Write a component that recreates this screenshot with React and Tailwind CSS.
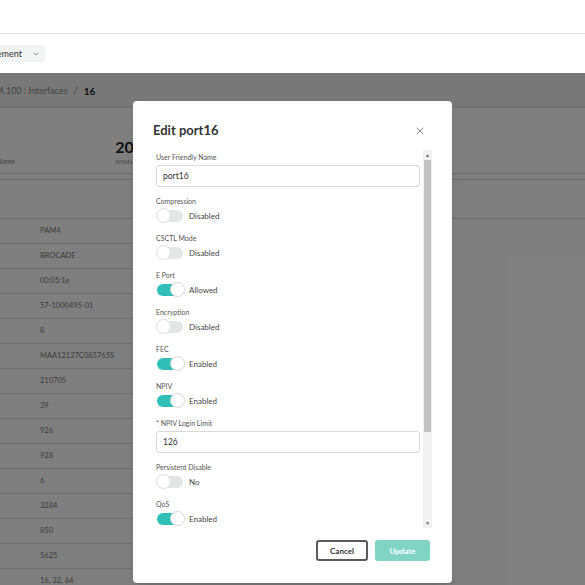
import { X, ChevronDown } from "lucide-react";

const rows = [
  "PAM4",
  "BROCADE",
  "00:05:1e",
  "57-1000495-01",
  "8",
  "MAA12127C085765S",
  "210705",
  "39",
  "926",
  "928",
  "6",
  "3284",
  "850",
  "5625",
  "16, 32, 64",
];

function Toggle({ on, text }) {
  return (
    <div className="flex items-center h-[16px] mt-[2px]">
      <div className="relative w-[29px] h-[16px] flex items-center">
        <div
          className={
            on
              ? "ml-[1px] w-[24px] h-[12px] rounded-full bg-[#2fbfb6]"
              : "ml-[1px] w-[26px] h-[12px] rounded-full bg-[#e4e6e6]"
          }
        ></div>
        <div
          className={
            on
              ? "absolute left-[14px] top-0 w-[15px] h-[15px] rounded-full bg-white border border-[#d6d6d6]"
              : "absolute left-0 top-0 w-[15px] h-[15px] rounded-full bg-white border border-[#dcdcdc]"
          }
        ></div>
      </div>
      <span className="ml-[4px] text-[8px] text-[#444]">{text}</span>
    </div>
  );
}

function Field({ label, children }) {
  return (
    <div className="flex flex-col">
      <div className="text-[7px] leading-[10px] text-[#555]">{label}</div>
      {children}
    </div>
  );
}

function TextInput({ value }) {
  return (
    <div className="mt-[3px] h-[22px] border border-[#dadada] rounded-[3px] flex items-center px-[6px] text-[8.5px] text-[#333]">
      {value}
    </div>
  );
}

export default function App() {
  return (
    <div
      className="relative w-[585px] h-[585px] overflow-hidden bg-white"
      style={{ fontFamily: "Lato, 'Open Sans', sans-serif" }}
    >
      {/* top bar */}
      <div className="h-[34px] border-b border-[#e2e4e4]"></div>
      <div className="h-[39px] flex items-center">
        <div className="h-[17px] w-[45px] bg-[#f2f3f3] flex items-center overflow-hidden">
          <span className="-ml-[30px] text-[9px] text-[#333] whitespace-nowrap">Management</span>
          <ChevronDown className="ml-[10px] w-[8px] h-[8px] text-[#555]" strokeWidth={2} />
        </div>
      </div>

      {/* page content under the backdrop */}
      <div className="h-[35px] pt-[2px] bg-[#f0f0f0] border-b border-[#dcdcdc] flex items-center overflow-hidden">
        <span className="-ml-[37px] text-[9px] text-[#888] whitespace-nowrap">10.18.254.100 : Interfaces</span>
        <span className="ml-[6px] text-[9px] text-[#888]">/</span>
        <span className="ml-[6px] text-[10px] font-bold text-[#222]">16</span>
      </div>
      <div className="h-[66px] border-b border-[#dcdcdc] flex items-end pb-[7px] overflow-hidden">
        <span className="-ml-[3px] text-[7px] text-[#888]">Name</span>
        <div className="ml-[100px] w-[60px] overflow-hidden flex flex-col">
          <span className="text-[16px] leading-[16px] font-bold text-[#222] whitespace-nowrap">20:00</span>
          <span className="text-[6px] text-[#888] mt-[2px]">WWN</span>
        </div>
      </div>
      <div className="h-[40px] mt-[5px] border-t border-b border-[#dcdcdc]"></div>
      <div className="w-[330px] flex flex-col">
        {rows.map((v) => (
          <div key={v} className="h-[25px] border-b border-[#dcdcdc] flex items-center pl-[40px] text-[7.5px] text-[#777]">
            {v}
          </div>
        ))}
      </div>

      {/* backdrop */}
      <div className="absolute left-0 right-0 top-[73px] bottom-0 bg-black/50"></div>

      {/* modal */}
      <div className="absolute left-[133px] top-[101px] w-[319px] h-[482px] bg-white rounded-[4px] shadow-lg flex flex-col px-5 pt-[21px] pb-[22px]">
        <div className="h-[18px] flex items-center justify-between">
          <span className="text-[13px] font-bold text-[#333]">Edit port16</span>
          <X className="mr-[6px] w-[12px] h-[12px] text-[#666]" strokeWidth={1.5} />
        </div>

        <div className="mt-[10px] h-[378px] flex">
          <div className="flex-1 overflow-hidden pt-[2px] pl-[3px] pr-[3px] flex flex-col gap-[9px]">
            <Field label="User Friendly Name">
              <TextInput value="port16" />
            </Field>
            <Field label="Compression">
              <Toggle on={false} text="Disabled" />
            </Field>
            <Field label="CSCTL Mode">
              <Toggle on={false} text="Disabled" />
            </Field>
            <Field label="E Port">
              <Toggle on text="Allowed" />
            </Field>
            <Field label="Encryption">
              <Toggle on={false} text="Disabled" />
            </Field>
            <Field label="FEC">
              <Toggle on text="Enabled" />
            </Field>
            <Field label="NPIV">
              <Toggle on text="Enabled" />
            </Field>
            <Field label="* NPIV Login Limit">
              <TextInput value="126" />
            </Field>
            <Field label="Persistent Disable">
              <Toggle on={false} text="No" />
            </Field>
            <Field label="QoS">
              <Toggle on text="Enabled" />
            </Field>
          </div>
          {/* scrollbar */}
          <div className="w-[9px] bg-[#f1f1f1] flex flex-col items-center">
            <div className="h-[10px] flex items-center text-[5px] leading-none text-[#666]">▲</div>
            <div className="w-[7px] h-[272px] bg-[#c1c1c1]"></div>
            <div className="flex-1"></div>
            <div className="h-[10px] flex items-center text-[5px] leading-none text-[#666]">▼</div>
          </div>
        </div>

        <div className="mt-[12px] flex justify-end gap-[7px] mr-[2px]">
          <button className="w-[52px] h-[21px] border-2 border-[#5a5a5a] rounded-[3px] text-[8px] font-bold text-[#333] bg-white">
            Cancel
          </button>
          <button className="w-[55px] h-[21px] rounded-[3px] text-[8px] font-bold text-white bg-[#7fd4c4]">
            Update
          </button>
        </div>
      </div>
    </div>
  );
}
